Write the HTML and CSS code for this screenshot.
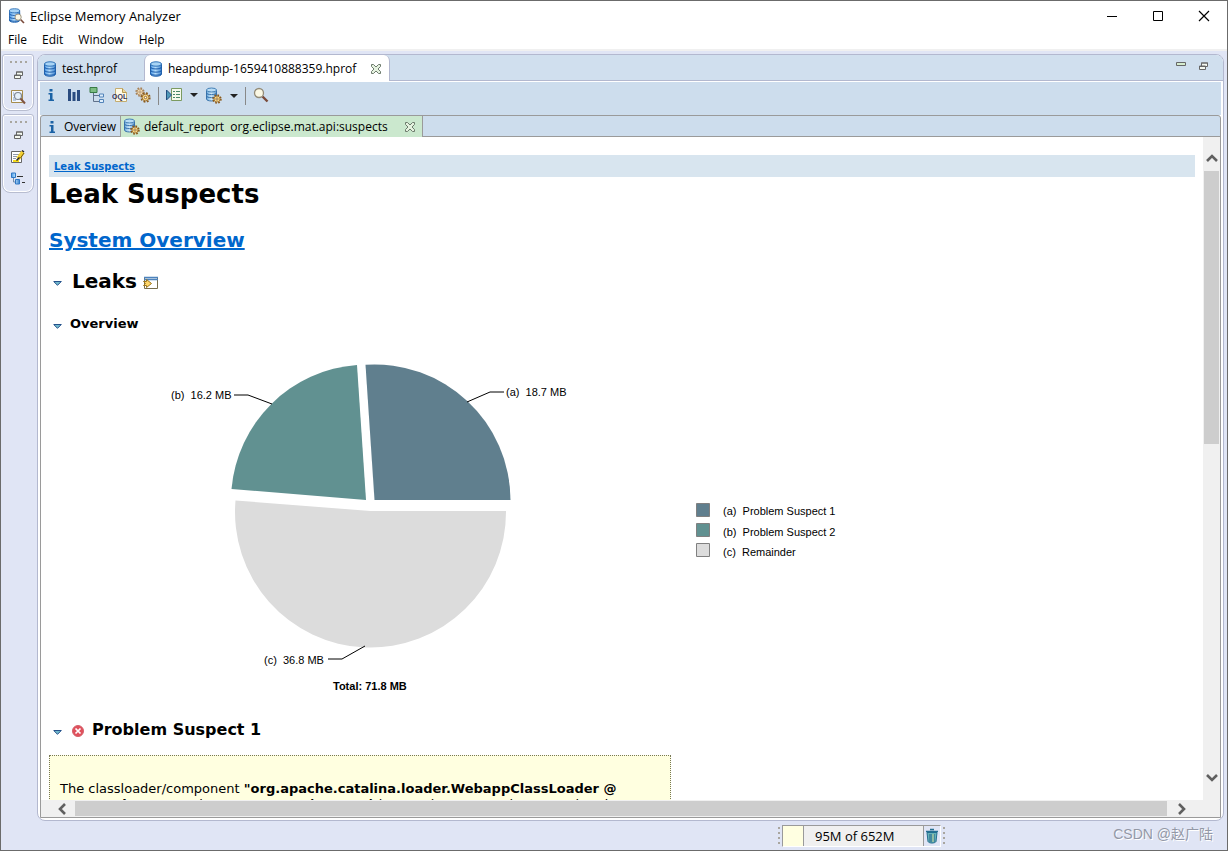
FILE: index.html
```html
<!DOCTYPE html>
<html lang="en">
<head>
<meta charset="utf-8">
<title>Eclipse Memory Analyzer</title>
<link rel="stylesheet" href="styles.css">
</head>
<body>
<svg class="defs" aria-hidden="true">
  <defs>
    <linearGradient id="blue" x1="0" x2="1"><stop offset="0" stop-color="#4a98e6"/><stop offset=".45" stop-color="#b5ddfa"/><stop offset="1" stop-color="#3a80cc"/></linearGradient>
    <linearGradient id="blueSoft" x1="0" x2="1"><stop offset="0" stop-color="#6dabde"/><stop offset=".5" stop-color="#cfe8f8"/><stop offset="1" stop-color="#5a96cc"/></linearGradient>
    <symbol id="db" viewBox="0 0 16 16">
      <path d="M2.500 3v10c0 3 11 3 11 0V3z" fill="url(#blue)" stroke="#2463ac"/>
      <path d="M2.500 6c0 2.600 11 2.600 11 0M2.500 9.200c0 2.600 11 2.600 11 0M2.500 12.200c0 2.600 11 2.600 11 0" fill="none" stroke="#1c5cab"/>
      <ellipse cx="8" cy="3" rx="5.500" ry="2.200" fill="#a8d4f5" stroke="#2f72b8"/>
    </symbol>
    <symbol id="gear" viewBox="0 0 10 10">
      <circle cx="5" cy="5" r="3.900" fill="none" stroke="#8a5a1c" stroke-width="1.600" stroke-dasharray="1.700 1.360"/>
      <circle cx="5" cy="5" r="3" fill="#f8d98a" stroke="#9a6a28" stroke-width=".8"/>
      <circle cx="5" cy="5" r="1.100" fill="#fff" stroke="#8a5a1c" stroke-width=".8"/>
    </symbol>
    <symbol id="gearPale" viewBox="0 0 10 10">
      <circle cx="5" cy="5" r="3.900" fill="none" stroke="#a8835a" stroke-width="1.600" stroke-dasharray="1.700 1.360"/>
      <circle cx="5" cy="5" r="3" fill="#f3dcb4" stroke="#ac865a" stroke-width=".8"/>
      <circle cx="5" cy="5" r="1.100" fill="#fff" stroke="#a07b50" stroke-width=".8"/>
    </symbol>
    <symbol id="lens" viewBox="0 0 16 16">
      <path d="M9.500 9.500l5 5" stroke="#7a4a3a" stroke-width="2.400"/>
      <circle cx="6" cy="6" r="4.500" fill="#fbf8e4" stroke="#938b78" stroke-width="1.300"/>
    </symbol>
    <symbol id="dbgear" viewBox="0 0 17 17">
      <path d="M1.500 3v9c0 2.600 10 2.600 10 0V3z" fill="url(#blueSoft)" stroke="#3973ab"/>
      <path d="M1.500 6c0 2.200 10 2.200 10 0M1.500 9c0 2.200 10 2.200 10 0" fill="none" stroke="#3570ac"/>
      <ellipse cx="6.500" cy="3" rx="5" ry="2" fill="#b8dcf5" stroke="#4580b6"/>
      <use href="#gear" x="7" y="7" width="10" height="10"/>
    </symbol>
    <symbol id="info" viewBox="0 0 16 16">
      <path d="M6.500 2h3v2.500h-3zM5.500 6h4v6.500h1.500V14H5.500v-1.500H7v-5H5.500z" fill="#1b62a5"/>
    </symbol>
    <symbol id="cross" viewBox="0 0 12 12">
      <path d="M1.500 1.500h2L6 4l2.500-2.500h2v2L8 6l2.500 2.500v2h-2L6 8l-2.500 2.500h-2v-2L4 6 1.500 3.500z" fill="#e5f2df" stroke="#6d7b6d"/>
    </symbol>
    <symbol id="restore" viewBox="0 0 9 8">
      <path d="M2.500 1h6v3.500h-6zM.500 4h6v3.500h-6z" fill="#f4f8f0" stroke="#666"/>
      <path d="M2 1h7M0 4.500h7" stroke="#666"/>
    </symbol>
    <symbol id="twist" viewBox="0 0 9 5">
      <path d="M.7.5h7.600L4.500 4.300z" fill="#70b8cc" stroke="#24508a"/>
    </symbol>
    <symbol id="chev" viewBox="0 0 12 10">
      <path d="M1 8l5-5 5 5" fill="none" stroke="#606060" stroke-width="2.600"/>
    </symbol>
  </defs>
</svg>

<div class="window">
  <header class="titlebar">
    <svg class="app-icon" viewBox="0 0 16 16"><use href="#db" x="-2" y="0" width="15" height="15"/><use href="#lens" x="5" y="5" width="11" height="11"/></svg>
    <h1 class="app-title">Eclipse Memory Analyzer</h1>
    <div class="window-buttons">
      <button aria-label="Minimize"><svg viewBox="0 0 12 12"><path d="M1 6.500h10" stroke="#000"/></svg></button>
      <button aria-label="Maximize"><svg viewBox="0 0 12 12"><path d="M1.500 1.500h9v9h-9z" fill="none" stroke="#000"/></svg></button>
      <button aria-label="Close"><svg viewBox="0 0 12 12"><path d="M1 1l10 10M11 1L1 11" stroke="#000" stroke-width="1.200"/></svg></button>
    </div>
  </header>

  <nav class="menubar">
    <button>File</button><button>Edit</button><button>Window</button><button>Help</button>
  </nav>

  <div class="workbench">
    <aside class="trim">
      <div class="trim-group">
        <span class="grip"></span>
        <button class="trim-restore" aria-label="Restore"><svg class="i9"><use href="#restore"/></svg></button>
        <button aria-label="Inspector"><svg class="i16" viewBox="0 0 16 16"><path d="M1.500 1.500h11v12h-11z" fill="#f4f8ff" stroke="#a58c4d"/><path d="M3 4h1M3 6h1M3 9h1M3 11h3" stroke="#789bc5"/><circle cx="8" cy="7" r="3.500" fill="#e5f0fa" stroke="#818995" stroke-width="1.200"/><path d="M10.500 9.500l4.500 5" stroke="#805440" stroke-width="2"/></svg></button>
      </div>
      <div class="trim-group">
        <span class="grip"></span>
        <button class="trim-restore" aria-label="Restore"><svg class="i9"><use href="#restore"/></svg></button>
        <button aria-label="Notes"><svg class="i16" viewBox="0 0 16 16"><path d="M1.500 2.500h10v11h-10z" fill="#fff" stroke="#666"/><path d="M3 5.500h6M3 7.500h4M3 9.500h3" stroke="#8f98aa"/><path d="M3 12h6" stroke="#f5db20" stroke-width="2"/><path d="M8 10l5-7" stroke="#f3cf30" stroke-width="4"/><path d="M6.500 11.500l3-3M12 1.500l2 1.500" stroke="#222" stroke-width="1.500"/><path d="M10.500 9l3.500-5" stroke="#6b5510"/></svg></button>
        <button aria-label="Navigation History"><svg class="i16" viewBox="0 0 16 16"><path d="M1.500 2h4v4.500h-4zM5.500 8.500h4V13h-4z" fill="url(#blue)" stroke="#2e77c5"/><path d="M3.500 7v4H5" fill="none" stroke="#6f8cab"/><path d="M7 5.500h6M12 11.500h3" stroke="#333"/></svg></button>
      </div>
    </aside>

    <main class="editor">
      <div class="tabs">
        <button class="tab tab-first"><svg class="i16"><use href="#db"/></svg>test.hprof</button>
        <button class="tab tab-active"><svg class="i16"><use href="#db"/></svg><span class="tab-name">heapdump-1659410888359.hprof</span><svg class="i12"><use href="#cross"/></svg></button>
        <div class="tab-tools">
          <button aria-label="Minimize view"><svg class="i10" viewBox="0 0 10 8"><path d="M.5.500h9v3h-9z" fill="#d5ecce" stroke="#666"/></svg></button>
          <button aria-label="Restore view"><svg class="i9"><use href="#restore"/></svg></button>
        </div>
      </div>

      <div class="editor-body">
        <div class="toolbar">
          <button aria-label="Overview"><svg class="i16"><use href="#info"/></svg></button>
          <button aria-label="Histogram"><svg class="i16" viewBox="0 0 16 16"><path d="M2 2h3v12H2zM6.500 5h3v9h-3zM11 3h3v11h-3z" fill="#2b4c80"/></svg></button>
          <button aria-label="Dominator tree"><svg class="i16" viewBox="0 0 16 16"><path d="M1 .5h7v5H1z" fill="#7dbd83" stroke="#397b45"/><path d="M4.500 6v8.500H10M4.500 8.500H10" fill="none" stroke="#60718a"/><path d="M10.500 7h4v3h-4zM10.500 12.500h4v3h-4z" fill="#deedfb" stroke="#5283b9"/></svg></button>
          <button aria-label="OQL"><svg class="i16" viewBox="0 0 16 16"><path d="M3.500 1.500h7l4 4v9h-11z" fill="#fffbe8" stroke="#c4ac70"/><path d="M10.500 1.500v4h4" fill="#eed9a0" stroke="#b59a55"/><text x="0" y="12" class="oql">OQL</text></svg></button>
          <button aria-label="Thread overview"><svg class="i16" viewBox="0 0 16 16"><use href="#gearPale" width="10" height="10"/><use href="#gear" x="5" y="5" width="11" height="11"/></svg></button>
          <span class="sep"></span>
          <button class="drop" aria-label="Run report"><svg class="i16" viewBox="0 0 16 16"><path d="M5.500 1.500h10v12h-10z" fill="#f4faec" stroke="#7b9a61"/><path d="M7 4.500h2M10 4.500h4M7 7.500h2M10 7.500h4M7 10.500h2M10 10.500h4" stroke="#48886a"/><path d="M.5 3v10l5-5z" fill="#4e98b8" stroke="#214e80"/></svg><i class="arrow"></i></button>
          <button class="drop" aria-label="Query browser"><svg class="i17"><use href="#dbgear"/></svg><i class="arrow"></i></button>
          <span class="sep"></span>
          <button aria-label="Search"><svg class="i16"><use href="#lens"/></svg></button>
        </div>

        <div class="pages">
          <div class="page-tabs">
            <button class="page-tab"><svg class="i16"><use href="#info"/></svg>Overview</button>
            <button class="page-tab page-active"><svg class="i17"><use href="#dbgear"/></svg><span class="page-name">default_report&nbsp; org.eclipse.mat.api:suspects</span><svg class="i12"><use href="#cross"/></svg></button>
          </div>

          <div class="viewport">
            <article class="report">
              <div class="crumbs"><a href="#top">Leak Suspects</a></div>
              <h1 id="top">Leak Suspects</h1>
              <h2 class="system"><a href="#system">System Overview</a></h2>
              <h2 class="leaks"><svg class="twist"><use href="#twist"/></svg>Leaks<svg class="i16" viewBox="0 0 16 14"><path d="M1.500 1.500h13v11h-13z" fill="#fff" stroke="#776d4b"/><path d="M1 1.500h14M1 3.500h14" stroke="#4d83bd" stroke-width="1.500"/><path d="M.5 5.500h3V3.500l5 4-5 4V9.500h-3l2-2z" fill="#ffd668" stroke="#9a741c"/></svg></h2>
              <h3 class="overview"><svg class="twist"><use href="#twist"/></svg>Overview</h3>
              <svg class="chart" viewBox="0 0 850 360" role="img" aria-label="Leak suspects by retained size">
                <path d="M325.500 155L316.500 19.700A136 136 0 0 1 461.500 155z" fill="#607f8e"/>
                <path d="M317 155L182.500 144A136 136 0 0 1 308 20z" fill="#619191"/>
                <path d="M321.500 166H457A135.500 135.500 0 1 1 186.500 155.500z" fill="#dcdcdc"/>
                <path d="M418 57l23-10h14M223 59l-24-9h-14M316 301l-23 13h-14" fill="none" stroke="#000"/>
                <text x="457" y="51" xml:space="preserve">(a)  18.7 MB</text>
                <text x="122" y="54" xml:space="preserve">(b)  16.2 MB</text>
                <text x="215" y="319" xml:space="preserve">(c)  36.8 MB</text>
                <text x="284" y="345" class="total">Total: 71.8 MB</text>
                <g stroke="#808080"><path d="M647.500 158.500h13v13h-13z" fill="#607f8e"/><path d="M647.500 178.500h13v13h-13z" fill="#619191"/><path d="M647.500 198.500h13v13h-13z" fill="#dcdcdc"/></g>
                <text x="674" y="170" xml:space="preserve">(a)  Problem Suspect 1</text>
                <text x="674" y="191" xml:space="preserve">(b)  Problem Suspect 2</text>
                <text x="674" y="211" xml:space="preserve">(c)  Remainder</text>
              </svg>
              <h3 class="suspect"><svg class="twist"><use href="#twist"/></svg><svg class="i12" viewBox="0 0 12 12"><circle cx="6" cy="6" r="5.500" fill="#e0505c" stroke="#d4606a"/><path d="M3.500 3.500l5 5M8.500 3.500l-5 5" stroke="#fff" stroke-width="1.700"/></svg>Problem Suspect 1</h3>
              <div class="description">
                <p>The classloader/component <strong>"org.apache.catalina.loader.WebappClassLoader @ 0xe0a12b48"</strong> occupies <strong>19,599,664 (26.03%)</strong> bytes. The memory is accumulated</p>
              </div>
            </article>
            <div class="vscroll">
              <svg class="sarrow"><use href="#chev"/></svg>
              <div class="vtrack"><div class="vthumb"></div></div>
              <svg class="sarrow down"><use href="#chev"/></svg>
            </div>
            <div class="hscroll">
              <svg class="sarrow left"><use href="#chev"/></svg>
              <div class="hthumb"></div>
              <svg class="sarrow right"><use href="#chev"/></svg>
            </div>
          </div>
        </div>
      </div>
    </main>
  </div>

  <footer class="statusbar">
    <span class="vgrip"></span>
    <div class="heap"><span class="used"></span><span class="heap-text">95M of 652M</span><button aria-label="Run garbage collector"><svg class="i16" viewBox="0 0 16 16"><path d="M3 4.500h10l-1 9c-1 2-7 2-8 0z" fill="#66b3b8" stroke="#236c8e"/><path d="M6 6v8M8 6v8M10 6v8" stroke="#205e88"/><path d="M9 6v8" stroke="#dff0a8"/><path d="M2 3.500h12M6 1.500h4" stroke="#246f92" stroke-width="1.500"/></svg></button></div>
    <span class="vgrip"></span>
    <span class="credit">CSDN @赵广陆</span>
  </footer>
</div>
</body>
</html>
```
FILE: styles.css
```css
* { box-sizing: border-box; }
body { margin: 0; font: 12px/18px "Open Sans", "Noto Sans", sans-serif; color: #000; }
button { margin: 0; padding: 0; border: 0; background: none; font: inherit; color: inherit; display: flex; align-items: center; justify-content: center; }
svg { display: block; flex: none; }
.defs { position: absolute; width: 0; height: 0; }
.i9 { width: 9px; height: 8px; }
.i10 { width: 10px; height: 8px; }
.i12 { width: 12px; height: 12px; }
.i16 { width: 16px; height: 16px; }
.i17 { width: 17px; height: 17px; }
.oql { font: 700 7px "Liberation Sans", sans-serif; fill: #33335c; }

.window { height: 100vh; display: flex; flex-direction: column; border: 1px solid #6b6b6b; background: #e0e5f5; }
.titlebar { height: 29px; flex: none; display: flex; align-items: center; background: #fff; padding-left: 8px; }
.app-icon { width: 16px; height: 16px; }
.app-title { margin: 0 0 0 5px; font-size: 13px; font-weight: 400; }
.window-buttons { margin-left: auto; display: flex; }
.window-buttons button { width: 46px; height: 28px; }
.window-buttons svg { width: 12px; height: 12px; }
.menubar { height: 21px; flex: none; display: flex; gap: 15px; padding: 1px 0 0 7px; background: #fff; border-bottom: 2px solid #f0f0f0; }

.workbench { flex: 1; min-height: 0; display: flex; gap: 3px; padding: 3px 3px 0 1px; }
.trim { width: 32px; flex: none; display: flex; flex-direction: column; gap: 3px; }
.trim-group { display: flex; flex-direction: column; align-items: center; gap: 6px; padding: 6px 0 5px; border: 1px solid #b8bdd0; border-radius: 3px 3px 8px 8px; box-shadow: inset 0 0 0 1px #fff; }
.trim-restore { padding-bottom: 4px; }
.grip { width: 17px; height: 2px; margin-bottom: 2px; background: repeating-linear-gradient(90deg, #a9a69f 0 2px, transparent 2px 5px); }

.editor { flex: 1; min-width: 0; display: flex; flex-direction: column; border: 1px solid #b3b8cf; border-radius: 8px; background: #fff; overflow: hidden; }
.tabs { height: 26px; flex: none; display: flex; background: #d0dfee; }
.tab { gap: 4px; padding: 2px 4px 0; border-bottom: 1px solid #b3b8cf; }
.tab-first { width: 106px; justify-content: flex-start; }
.tab-active { padding: 2px 7px 0 3px; background: #fff; border: 1px solid #b3b8cf; border-width: 0 1px; border-radius: 6px 6px 0 0; }
.tab-name { min-width: 195px; text-align: left; }
.tab-active .i12 { margin-left: 3px; }
.tab-tools { flex: 1; display: flex; justify-content: flex-end; align-items: flex-start; gap: 13px; padding: 7px 15px 0 0; border-bottom: 1px solid #b3b8cf; }

.editor-body { flex: 1; min-height: 0; display: flex; flex-direction: column; padding: 1px 2px 2px; }
.toolbar { height: 33px; flex: none; display: flex; align-items: flex-start; gap: 7px; padding: 5px 3px 0; background: #cddded; }
.drop { gap: 8px; }
.arrow { border: 4px solid transparent; border-top-color: #222; border-bottom: 0; }
.sep { width: 1px; height: 18px; background: #888; }

.pages { flex: 1; min-height: 0; display: flex; flex-direction: column; border: 1px solid #9a9a9a; border-radius: 3px 3px 0 0; background: #cddded; }
.page-tabs { height: 21px; flex: none; display: flex; border-bottom: 1px solid #9a9a9a; }
.page-tab { gap: 4px; padding: 1px 4px 0 3px; border-right: 1px solid #9a9a9a; }
.page-active { padding: 0 6px 0 2px; margin-bottom: -1px; background: #cbe8ce; }
.page-name { min-width: 253px; text-align: left; }
.page-active .i12 { margin-left: 3px; }

.viewport { flex: 1; min-height: 0; display: grid; grid-template: minmax(0, 1fr) 17px / minmax(0, 1fr) 17px; background: #f0f0f0; }
.report { overflow: hidden; padding: 18px 8px 0; background: #fff; font: 13px/16px "DejaVu Sans", sans-serif; }
.report a { color: #0066cc; }
.report h1, .report h2, .report h3 { margin: 0; display: flex; align-items: center; }
.crumbs { height: 22px; padding: 4px 5px 0; background: #d8e5ef; font-size: 10px; font-weight: 700; }
.report h1 { font-size: 26px; line-height: 34px; }
.report .system { margin-top: 15px; font-size: 20px; line-height: 28px; }
.report .leaks { margin-top: 14px; gap: 10px; font-size: 20px; line-height: 26px; }
.leaks .i16 { margin: 4px 0 0 -4px; }
.report .overview { margin-top: 21px; gap: 8px; font-size: 13px; line-height: 18px; }
.twist { width: 9px; height: 5px; margin: 4px 0 0 4px; }
.chart { width: 850px; height: 360px; margin-top: 12px; font: 11px "Liberation Sans", sans-serif; }
.chart .total { font-weight: 700; }
.report .suspect { margin-top: 14px; gap: 8px; font-size: 16px; line-height: 22px; }
.suspect .i12 { margin: 2px 0 0 2px; }
.description { width: 622px; margin-top: 14px; padding: 25px 10px; border: 1px dotted #777755; background: #ffffe0; }
.description p { margin: 0; }

.sarrow { width: 12px; height: 10px; }
.down { transform: rotate(180deg); }
.left { transform: rotate(-90deg); }
.right { transform: rotate(90deg); }
.vscroll { display: flex; flex-direction: column; align-items: center; padding: 16px 1px 17px; }
.vtrack { flex: 1; align-self: stretch; margin: 8px 0; }
.vthumb { height: 46%; background: #cdcdcd; }
.hscroll { display: flex; align-items: center; gap: 7px; padding: 1px 15px; }
.hthumb { flex: 1; align-self: stretch; background: #cdcdcd; }
.hscroll .right { margin-left: 2px; }

.statusbar { position: relative; height: 29px; flex: none; display: flex; align-items: center; justify-content: flex-end; gap: 2px; padding: 3px 282px 3px 0; }
.vgrip { width: 2px; height: 17px; background: repeating-linear-gradient(#a9a69f 0 2px, transparent 2px 5px); }
.heap { width: 159px; height: 22px; display: flex; border: 1px solid #9a9a9a; border-right-color: #fff; border-bottom-color: #fff; }
.used { width: 21px; background: #ffffe1; border-right: 1px solid #9a9a9a; }
.heap-text { flex: 1; padding-left: 11px; background: #f0f0f0; line-height: 20px; font-size: 13px; }
.heap button { width: 17px; border-left: 1px solid #9a9a9a; }
.credit { position: absolute; right: 14px; top: 4px; font: 14px/18px "Liberation Sans", "Noto Sans CJK SC", sans-serif; color: #9398a6; text-shadow: 1px 1px 0 #fff; }
```
